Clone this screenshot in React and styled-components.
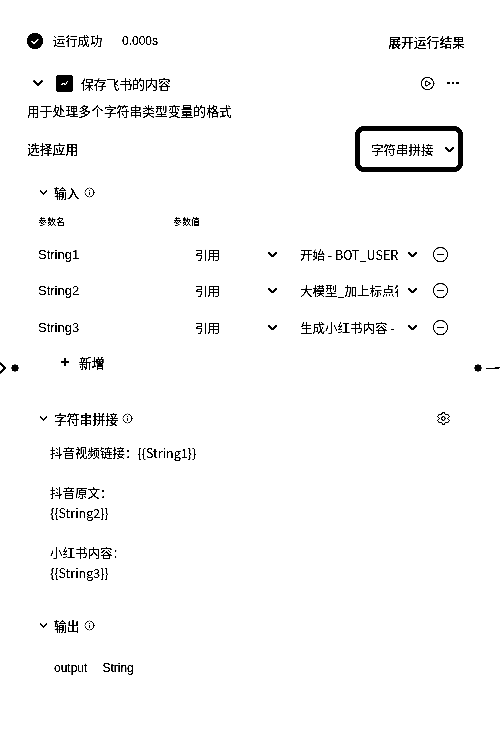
import React from 'react'
import styled, { createGlobalStyle } from 'styled-components'
import { ChevronDown, Plus, Settings, CirclePlay, Ellipsis, CircleMinus, Info } from 'lucide-react'

const GlobalStyle = createGlobalStyle`
  html, body { margin: 0; padding: 0; background: #fff; }
  body {
    font-family: "Noto Sans CJK SC", "Liberation Sans", sans-serif;
    color: #000;
  }
`

const rows = [
  { name: 'String1', value: '开始 - BOT_USER_INPUT' },
  { name: 'String2', value: '大模型_加上标点符号 - output' },
  { name: 'String3', value: '生成小红书内容 - output' },
]

export default function App() {
  return (
    <Page>
      <GlobalStyle />
      <StatusBar>
        <StatusLeft>
          <StatusIcon viewBox="0 0 16 16">
            <circle cx="8" cy="8" r="8" fill="#111" />
            <path d="M4.5 8.2l2.4 2.4 4.6-5" fill="none" stroke="#fff" strokeWidth="1.4" />
          </StatusIcon>
          <StatusText>运行成功</StatusText>
          <Duration>0.000s</Duration>
        </StatusLeft>
        <Expand>展开运行结果</Expand>
      </StatusBar>

      <TitleRow>
        <ChevronDown size={16} strokeWidth={2.4} />
        <NodeIcon>
          <svg width="10" height="10" viewBox="0 0 10 10">
            <path d="M1 7l3-2 1 2 3-4" fill="none" stroke="#fff" strokeWidth="1.1" />
          </svg>
        </NodeIcon>
        <Title>保存飞书的内容</Title>
        <TitleActions>
          <CirclePlay size={15} strokeWidth={1.6} />
          <Ellipsis size={16} strokeWidth={2} />
        </TitleActions>
      </TitleRow>
      <Description>用于处理多个字符串类型变量的格式</Description>

      <SelectRow>
        <SelectLabel>选择应用</SelectLabel>
        <AppSelect>
          <span>字符串拼接</span>
          <ChevronDown size={15} strokeWidth={2.6} />
        </AppSelect>
      </SelectRow>

      <SectionHead $top={10}>
        <ChevronDown size={13} strokeWidth={2} />
        <SectionTitle>输入</SectionTitle>
        <Info size={11} strokeWidth={1.6} />
      </SectionHead>

      <ParamHead>
        <HeadCell $width={135}>参数名</HeadCell>
        <HeadCell>参数值</HeadCell>
      </ParamHead>

      <ParamList>
        {rows.map((row) => (
          <ParamRow key={row.name}>
            <ParamName>{row.name}</ParamName>
            <RefType>
              <span>引用</span>
              <ChevronDown size={15} strokeWidth={2.4} />
            </RefType>
            <RefValue>{row.value}</RefValue>
            <ChevronDown size={15} strokeWidth={2.4} />
            <CircleMinus size={17} strokeWidth={1.5} />
          </ParamRow>
        ))}
      </ParamList>

      <AddRow>
        <Plus size={14} strokeWidth={2} />
        <span>新增</span>
        <LeftPort>
          <svg width="22" height="14" viewBox="0 0 22 14">
            <path d="M0 2l5 5-5 5" fill="none" stroke="#000" strokeWidth="1.8" />
            <circle cx="15" cy="7" r="3.5" fill="#000" />
          </svg>
        </LeftPort>
        <RightPort>
          <svg width="26" height="14" viewBox="0 0 26 14">
            <circle cx="4" cy="7" r="3.5" fill="#000" />
            <path d="M12 7.5h8l6-1" fill="none" stroke="#000" strokeWidth="1.4" />
          </svg>
        </RightPort>
      </AddRow>

      <SectionHead $top={36}>
        <ChevronDown size={13} strokeWidth={2} />
        <SectionTitle>字符串拼接</SectionTitle>
        <Info size={11} strokeWidth={1.6} />
        <SectionGear>
          <Settings size={15} strokeWidth={1.5} />
        </SectionGear>
      </SectionHead>

      <Template>
        <TemplateBlock>抖音视频链接：{'{{String1}}'}</TemplateBlock>
        <TemplateBlock>抖音原文：<br />{'{{String2}}'}</TemplateBlock>
        <TemplateBlock>小红书内容：<br />{'{{String3}}'}</TemplateBlock>
      </Template>

      <SectionHead $top={32}>
        <ChevronDown size={13} strokeWidth={2} />
        <SectionTitle>输出</SectionTitle>
        <Info size={11} strokeWidth={1.6} />
      </SectionHead>

      <OutputRow>
        <span>output</span>
        <span>String</span>
      </OutputRow>
    </Page>
  )
}

const Page = styled.div`
  position: relative;
  width: 500px;
  height: 730px;
  box-sizing: border-box;
  padding: 32px 35px 0 27px;
  overflow: hidden;
  background: #fff;
  filter: brightness(0.85) contrast(8);
`

const StatusBar = styled.div`
  display: flex;
  align-items: center;
  justify-content: space-between;
  height: 18px;
`

const StatusLeft = styled.div`
  display: flex;
  align-items: center;
  font-size: 12px;
`

const StatusIcon = styled.svg`
  width: 16px;
  height: 16px;
  margin-right: 10px;
`

const StatusText = styled.span`
  font-size: 12.3px;
  width: 69px;
`

const Duration = styled.span`
  font-family: "Liberation Sans", sans-serif;
  font-size: 12px;
`

const Expand = styled.span`
  font-size: 12.8px;
  font-weight: 500;
`

const TitleRow = styled.div`
  display: flex;
  align-items: center;
  height: 20px;
  margin-top: 23px;
  padding-left: 3px;

  > svg:first-child {
    margin-right: 10px;
  }
`

const NodeIcon = styled.div`
  display: flex;
  align-items: center;
  justify-content: center;
  width: 17px;
  height: 17px;
  border-radius: 3px;
  background: #111;
  margin-right: 8px;
`

const Title = styled.span`
  font-size: 12.8px;
`

const TitleActions = styled.div`
  display: flex;
  align-items: center;
  gap: 10px;
  margin-left: auto;
  margin-right: 4px;
`

const Description = styled.div`
  font-size: 12.8px;
  line-height: 20px;
  margin-top: 8px;
`

const SelectRow = styled.div`
  display: flex;
  align-items: center;
  justify-content: space-between;
  margin-top: 5px;
  padding-right: 2px;
`

const SelectLabel = styled.span`
  font-size: 12.8px;
  font-weight: 500;
  margin-bottom: 2px;
`

const AppSelect = styled.div`
  display: flex;
  align-items: center;
  justify-content: space-between;
  box-sizing: border-box;
  width: 108px;
  height: 46px;
  border: 5px solid #000;
  border-radius: 9px;
  padding: 0 1px 0 11px;
  font-size: 12.5px;
`

const SectionHead = styled.div`
  position: relative;
  display: flex;
  align-items: center;
  gap: 4px;
  height: 20px;
  margin-top: ${(p) => p.$top}px;
  padding-left: 10px;
`

const SectionTitle = styled.span`
  font-size: 12.8px;
  font-weight: 500;
`

const SectionGear = styled.span`
  display: flex;
  margin-left: auto;
  margin-right: 14px;
`

const ParamHead = styled.div`
  display: flex;
  margin-top: 13px;
  padding-left: 11px;
`

const HeadCell = styled.span`
  font-size: 9px;
  line-height: 14px;
  width: ${(p) => (p.$width ? `${p.$width}px` : 'auto')};
`

const ParamList = styled.div`
  display: flex;
  flex-direction: column;
  gap: 16.5px;
  margin-top: 15px;
  padding-left: 11px;
`

const ParamRow = styled.div`
  display: flex;
  align-items: center;
  height: 20px;

  > svg:last-child {
    margin-left: 12px;
  }
`

const ParamName = styled.span`
  font-family: "Liberation Sans", sans-serif;
  font-size: 13px;
  width: 157px;
`

const RefType = styled.div`
  display: flex;
  align-items: center;
  justify-content: space-between;
  width: 85px;
  font-size: 12.5px;
  margin-right: 20px;
`

const RefValue = styled.span`
  font-size: 12.5px;
  width: 98px;
  margin-right: 7px;
  white-space: nowrap;
  overflow: hidden;
`

const AddRow = styled.div`
  display: flex;
  align-items: center;
  gap: 7px;
  height: 20px;
  margin-top: 15px;
  padding-left: 31px;
  font-size: 12.8px;
  font-weight: 500;
`

const LeftPort = styled.span`
  position: absolute;
  left: 0;
  top: 361px;
  display: flex;
`

const RightPort = styled.span`
  position: absolute;
  right: 0;
  top: 361px;
  display: flex;
`

const Template = styled.div`
  display: flex;
  flex-direction: column;
  gap: 20px;
  margin-top: 15px;
  padding-left: 23px;
  font-size: 12.5px;
  line-height: 20px;
`

const TemplateBlock = styled.div``

const OutputRow = styled.div`
  display: flex;
  gap: 15px;
  margin-top: 25px;
  padding-left: 27px;
  font-family: "Liberation Sans", sans-serif;
  font-size: 12px;
  line-height: 16px;
`
